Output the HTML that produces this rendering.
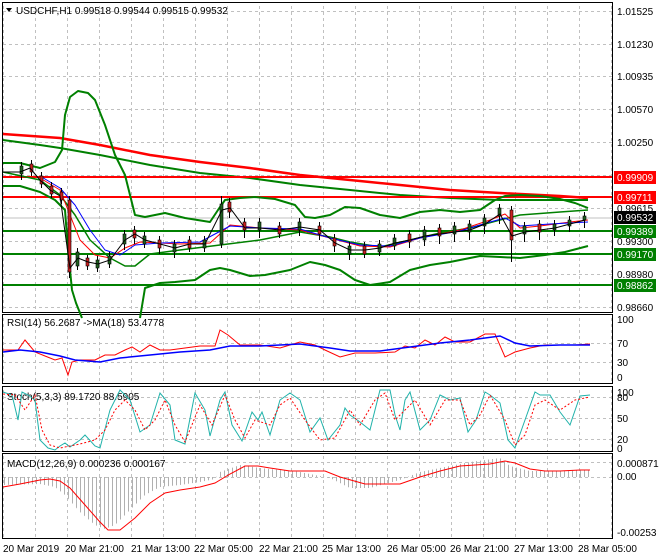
<!DOCTYPE html>
<html><head><meta charset="utf-8"><style>
html,body{margin:0;padding:0;background:#fff;width:660px;height:560px;overflow:hidden}
svg{display:block;font-family:"Liberation Sans",sans-serif}
text{font-size:10px;fill:#000}
.w{fill:#fff}
</style></head><body>
<svg width="660" height="560" viewBox="0 0 660 560" xmlns="http://www.w3.org/2000/svg">
<defs>
<pattern id="vg" x="35" y="0" width="32" height="6" patternUnits="userSpaceOnUse">
<rect x="0" y="0" width="1" height="3" fill="#c0c0c0"/>
</pattern>
<pattern id="hp" x="4" y="0" width="4" height="10" patternUnits="userSpaceOnUse">
<rect x="0" y="0" width="1" height="10" fill="#b0b0b0"/>
</pattern>
</defs>
<rect width="660" height="560" fill="#fff"/>
<!-- vertical grid -->
<rect x="3" y="3" width="609" height="309" fill="url(#vg)"/>
<rect x="3" y="315" width="609" height="68" fill="url(#vg)"/>
<rect x="3" y="387" width="609" height="64" fill="url(#vg)"/>
<rect x="3" y="454" width="609" height="84" fill="url(#vg)"/>
<!-- horizontal grid -->
<path stroke="#c0c0c0" stroke-dasharray="3,3" fill="none" d="M3,11.5H612M3,44.5H612M3,76.5H612M3,109.5H612M3,142.5H612M3,175.5H612M3,208.5H612M3,241.5H612M3,274.5H612M3,307.5H612M3,343.5H612M3,362.5H612M3,397.5H612M3,418.5H612M3,439.5H612M3,462.5H612M3,477.5H612"/>
<!-- panel borders -->
<g stroke="#000" fill="none" stroke-width="1">
<rect x="2.5" y="2.5" width="610" height="310"/>
<rect x="2.5" y="314.5" width="610" height="69"/>
<rect x="2.5" y="386.5" width="610" height="65"/>
<rect x="2.5" y="453.5" width="610" height="85"/>
</g>
<!-- main chart -->
<g fill="none" stroke-linejoin="round">
<polyline stroke="#ff0000" stroke-width="2.5" points="3,134 60,138 100,145 150,155 200,162 250,168 300,175 350,180 400,185 450,190 500,193 560,196 588,198"/>
<polyline stroke="#008000" stroke-width="2" points="3,140 40,145 60,148 100,155 150,165 200,173 250,178 300,185 350,190 400,195 450,198 500,200 560,200 588,200"/>
<line x1="3" y1="177" x2="612" y2="177" stroke="#ff0000" stroke-width="2"/>
<line x1="3" y1="197" x2="612" y2="197" stroke="#ff0000" stroke-width="2"/>
<line x1="3" y1="231" x2="612" y2="231" stroke="#008000" stroke-width="2"/>
<line x1="3" y1="254" x2="612" y2="254" stroke="#008000" stroke-width="2"/>
<line x1="3" y1="285" x2="612" y2="285" stroke="#008000" stroke-width="2"/>
<line x1="3" y1="218" x2="612" y2="218" stroke="#c0c0c0" stroke-width="1"/>
<polyline stroke="#008000" stroke-width="2" points="3,163 20,163 40,168 55,162 62,150 65,115 70,97 78,91 88,93 95,100 105,125 115,155 125,175 135,215 145,217 165,213 185,218 210,222 218,210 225,200 240,198 255,197 275,199 295,205 305,217 315,218 330,215 345,207 360,208 380,215 400,218 420,212 440,210 460,212 480,210 495,200 505,196 520,195 540,196 560,199 575,203 588,208"/>
<polyline stroke="#008000" stroke-width="2" points="3,186 20,186 40,192 55,200 65,210 68,250 72,290 76,303 82,318"/>
<polyline stroke="#008000" stroke-width="2" points="140,318 145,288 160,283 175,282 195,280 210,270 220,268 230,270 250,276 265,275 290,270 310,262 325,265 340,270 355,280 370,285 390,282 410,270 430,265 450,262 480,256 500,257 520,258 545,255 565,252 588,246"/>
<polyline stroke="#008000" stroke-width="1.5" points="3,172 40,180 60,195 75,215 90,240 110,258 125,266 135,266 150,254 180,250 220,245 260,240 300,232 330,237 350,242 380,247 410,240 440,233 470,228 500,220 520,215 560,212 588,210"/>
<polyline stroke="#ff0000" stroke-width="1" points="40,178 60,190 70,215 80,240 95,255 110,258 125,248 140,242 180,244 210,243 230,225 260,228 300,230 330,238 360,246 390,247 420,238 460,230 490,220 505,214 520,228 540,226 570,222 588,220"/>
<polyline stroke="#0000ff" stroke-width="1" points="40,176 60,188 75,205 90,230 105,250 120,255 135,245 160,243 200,242 230,226 260,228 300,229 330,238 360,245 390,246 420,238 460,231 490,222 505,218 520,226 550,224 588,222"/>
</g>
<!-- candles -->
<path stroke="#000" stroke-width="1" fill="none" d="M21.5,162V180M31.5,160V176M41.5,172V188M51.5,182V198M61.5,188V204M69.5,196V278M77.5,248V270M87.5,255V270M97.5,256V272M109.5,252V268M124.5,230V250M134.5,226V244M144.5,232V248M159.5,236V254M174.5,240V258M189.5,236V252M204.5,236V252M221.5,196V248M229.5,198V218M244.5,218V238M259.5,218V238M279.5,222V238M299.5,218V236M319.5,222V240M334.5,234V252M349.5,242V260M364.5,242V258M379.5,240V256M394.5,234V250M409.5,230V248M424.5,226V246M439.5,224V244M454.5,222V242M469.5,220V240M484.5,214V234M499.5,204V224M511.5,206V262M524.5,222V242M539.5,220V240M554.5,220V236M569.5,216V232M584.5,212V228"/>
<g stroke="#000" stroke-width="0.6">
<rect x="20" y="166" width="3" height="8" fill="#206020"/><rect x="30" y="164" width="3" height="8" fill="#cc2020"/><rect x="40" y="176" width="3" height="8" fill="#cc2020"/><rect x="50" y="186" width="3" height="8" fill="#cc2020"/><rect x="60" y="192" width="3" height="8" fill="#cc2020"/><rect x="68" y="200" width="3" height="72" fill="#cc2020"/><rect x="76" y="252" width="3" height="14" fill="#206020"/><rect x="86" y="258" width="3" height="8" fill="#cc2020"/><rect x="96" y="260" width="3" height="8" fill="#206020"/><rect x="108" y="256" width="3" height="8" fill="#206020"/><rect x="123" y="234" width="3" height="10" fill="#206020"/><rect x="133" y="230" width="3" height="8" fill="#cc2020"/><rect x="143" y="236" width="3" height="8" fill="#206020"/><rect x="158" y="240" width="3" height="8" fill="#cc2020"/><rect x="173" y="244" width="3" height="8" fill="#206020"/><rect x="188" y="240" width="3" height="8" fill="#cc2020"/><rect x="203" y="240" width="3" height="8" fill="#206020"/><rect x="220" y="204" width="3" height="40" fill="#206020"/><rect x="228" y="202" width="3" height="10" fill="#cc2020"/><rect x="243" y="222" width="3" height="8" fill="#cc2020"/><rect x="258" y="222" width="3" height="8" fill="#206020"/><rect x="278" y="226" width="3" height="8" fill="#cc2020"/><rect x="298" y="222" width="3" height="8" fill="#206020"/><rect x="318" y="226" width="3" height="8" fill="#cc2020"/><rect x="333" y="238" width="3" height="8" fill="#cc2020"/><rect x="348" y="246" width="3" height="8" fill="#206020"/><rect x="363" y="246" width="3" height="8" fill="#cc2020"/><rect x="378" y="244" width="3" height="8" fill="#206020"/><rect x="393" y="238" width="3" height="8" fill="#206020"/><rect x="408" y="234" width="3" height="8" fill="#cc2020"/><rect x="423" y="230" width="3" height="10" fill="#206020"/><rect x="438" y="228" width="3" height="8" fill="#cc2020"/><rect x="453" y="226" width="3" height="8" fill="#206020"/><rect x="468" y="224" width="3" height="8" fill="#206020"/><rect x="483" y="218" width="3" height="8" fill="#206020"/><rect x="498" y="208" width="3" height="8" fill="#206020"/><rect x="510" y="210" width="3" height="30" fill="#cc2020"/><rect x="523" y="226" width="3" height="8" fill="#206020"/><rect x="538" y="224" width="3" height="8" fill="#cc2020"/><rect x="553" y="224" width="3" height="6" fill="#206020"/><rect x="568" y="220" width="3" height="6" fill="#206020"/><rect x="583" y="216" width="3" height="4" fill="#206020"/>
</g>
<polyline fill="none" stroke="#000" stroke-width="1" points="3,172 20,172 30,168 40,180 50,190 60,196 70,268 78,258 88,262 98,264 110,260 125,240 135,234 145,240 160,244 175,248 190,244 205,244 222,210 230,208 245,228 260,228 280,230 300,227 320,230 335,243 350,250 365,250 380,248 395,243 410,240 425,236 440,234 455,232 470,230 485,224 500,214 512,236 525,232 540,230 555,228 570,224 585,220"/>
<!-- title -->
<path d="M6,8 L12,8 L9,12 Z" fill="#000"/>
<text x="16" y="14">USDCHF,H1  0.99518 0.99544 0.99515 0.99532</text>
<!-- price axis -->
<g>
<text x="617" y="15">1.01525</text>
<text x="617" y="48">1.01230</text>
<text x="617" y="80">1.00935</text>
<text x="617" y="113">1.00570</text>
<text x="617" y="146">1.00250</text>
<text x="617" y="212">0.99615</text>
<text x="617" y="245">0.99300</text>
<text x="617" y="278">0.98980</text>
<text x="617" y="311">0.98660</text>
<rect x="614" y="171" width="42" height="13" fill="#ff0000"/><text x="617" y="181" class="w">0.99909</text>
<rect x="614" y="191" width="42" height="13" fill="#ff0000"/><text x="617" y="201" class="w">0.99711</text>
<rect x="614" y="211" width="42" height="13" fill="#000"/><text x="617" y="221" class="w">0.99532</text>
<rect x="614" y="225" width="42" height="13" fill="#008000"/><text x="617" y="235" class="w">0.99389</text>
<rect x="614" y="248" width="42" height="13" fill="#008000"/><text x="617" y="258" class="w">0.99170</text>
<rect x="614" y="279" width="42" height="13" fill="#008000"/><text x="617" y="289" class="w">0.98862</text>
</g>
<!-- RSI -->
<text x="7" y="326">RSI(14) 56.2687  -&gt;MA(18) 53.4778</text>
<text x="617" y="323">100</text><text x="617" y="347">70</text><text x="617" y="366">30</text><text x="617" y="381">0</text>
<polyline fill="none" stroke="#ff0000" stroke-width="1" points="3,350 18,350 25,340 35,352 45,356 55,360 62,358 68,375 72,362 80,360 95,360 105,355 115,355 125,350 132,347 140,352 150,345 160,350 170,350 185,348 200,346 215,346 220,330 228,335 240,345 260,345 280,348 300,342 315,345 325,350 340,357 355,353 375,353 395,352 405,346 415,348 425,340 435,345 445,337 455,342 470,342 485,334 495,334 505,357 515,352 530,348 545,345 560,345 575,345 590,344"/>
<polyline fill="none" stroke="#0000ff" stroke-width="1.5" points="3,352 20,350 40,352 60,356 75,360 100,362 120,358 150,355 180,352 210,350 230,346 260,346 300,344 330,348 350,351 380,351 410,347 440,343 470,340 500,336 515,343 530,346 560,345 590,345"/>
<!-- Stoch -->
<text x="7" y="400">Stoch(5,3,3) 89.1720 88.5905</text>
<text x="617" y="396">100</text><text x="617" y="401">80</text><text x="617" y="422">50</text><text x="617" y="443">20</text><text x="617" y="452">0</text>
<polyline fill="none" stroke="#20b2aa" stroke-width="1" points="3,392 12,395 18,420 22,392 28,395 35,400 40,440 48,448 55,450 60,446 65,443 70,447 80,440 85,435 95,446 100,448 110,410 120,390 130,400 140,432 150,425 160,393 170,405 175,440 185,444 195,393 205,410 210,436 220,400 225,392 232,425 242,441 252,412 258,420 262,412 270,435 280,400 290,393 300,400 310,432 320,418 328,440 340,425 345,408 350,415 360,422 370,430 380,390 390,390 395,415 400,430 405,400 410,392 420,430 430,420 440,395 450,400 460,398 468,432 476,420 485,392 490,395 500,403 508,440 515,448 525,420 535,392 540,395 550,395 560,412 570,425 580,396 590,395"/>
<polyline fill="none" stroke="#ff0000" stroke-width="1" stroke-dasharray="2,2" points="3,394 15,395 25,410 35,395 42,430 50,445 60,448 80,444 95,440 105,430 115,410 125,400 135,410 145,430 155,420 165,400 175,425 185,442 200,405 212,425 225,395 235,420 245,438 255,420 270,425 280,405 290,398 305,420 320,440 335,438 350,410 360,425 375,400 385,393 395,420 405,410 415,400 430,425 445,400 460,400 470,425 480,415 490,395 505,420 515,445 525,435 535,405 545,400 560,410 575,400 590,397"/>
<!-- MACD -->
<text x="7" y="467">MACD(12,26,9) 0.000236 0.000167</text>
<text x="617" y="467">0.000871</text><text x="617" y="480">0.00</text><text x="617" y="536">-0.00253</text>
<polygon fill="url(#hp)" points="3,485 40,484 55,487 65,495 80,512 95,525 105,529 115,525 130,510 145,495 160,487 180,485 200,482 215,479 220,472 240,465 260,468 300,472 330,478 350,488 370,488 400,480 420,472 450,466 470,462 500,458 510,466 530,471 560,471 590,470 590,477 3,477"/>
<polyline fill="none" stroke="#ff0000" stroke-width="1" points="3,487 20,484 40,480 50,479 60,481 70,488 85,505 100,522 108,530 120,530 135,518 150,503 165,493 180,490 200,487 215,483 230,474 245,466 258,466 270,468 290,471 325,471 340,477 365,484 380,484 400,484 420,477 440,471 460,466 475,465 490,464 505,461 515,463 530,469 545,471 560,471 580,470 590,470"/>
<!-- time axis -->
<g>
<text x="3" y="552">20 Mar 2019</text>
<text x="65" y="552">20 Mar 21:00</text>
<text x="131" y="552">21 Mar 13:00</text>
<text x="194" y="552">22 Mar 05:00</text>
<text x="259" y="552">22 Mar 21:00</text>
<text x="322" y="552">25 Mar 13:00</text>
<text x="387" y="552">26 Mar 05:00</text>
<text x="450" y="552">26 Mar 21:00</text>
<text x="514" y="552">27 Mar 13:00</text>
<text x="578" y="552">28 Mar 05:00</text>
</g>
</svg>
</body></html>
